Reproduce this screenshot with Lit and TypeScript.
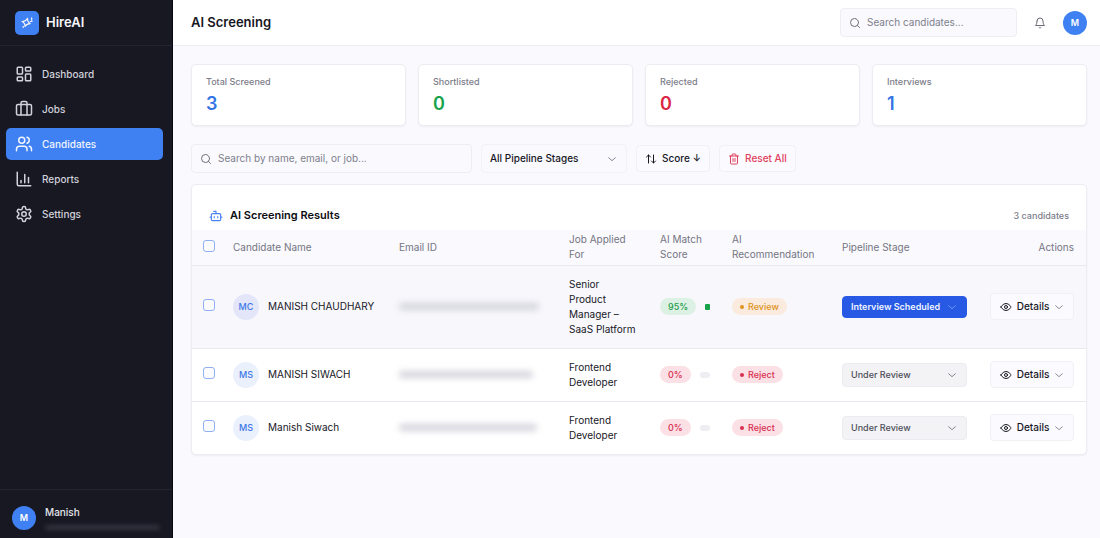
import { LitElement, html, svg, css } from "lit";
import { customElement } from "lit/decorators.js";
import { classMap } from "lit/directives/class-map.js";
import { styleMap } from "lit/directives/style-map.js";

const icons = {
  sparkles: svg`<path d="M13 4c-.4 5 .8 7 4.500 9-4.500-.2-6.500 1-9 5 .4-4.500-.8-6.500-5-8.500 4.700.3 7-1 9.500-5.500z"/><path d="M20 3v4M17.500 9.500l3.500-.5M5.500 17.500v2"/>`,
  dashboard: svg`<rect width="7" height="9" x="3" y="3" rx="1"/><rect width="7" height="5" x="14" y="3" rx="1"/><rect width="7" height="9" x="14" y="12" rx="1"/><rect width="7" height="5" x="3" y="16" rx="1"/>`,
  jobs: svg`<rect width="20" height="14" x="2" y="6" rx="2"/><path d="M16 20V4a2 2 0 0 0-2-2h-4a2 2 0 0 0-2 2v16"/>`,
  users: svg`<path d="M16 21v-2a4 4 0 0 0-4-4H6a4 4 0 0 0-4 4v2"/><circle cx="9" cy="7" r="4"/><path d="M22 21v-2a4 4 0 0 0-3-3.870M16 3.130a4 4 0 0 1 0 7.750"/>`,
  chart: svg`<path d="M3 3v16a2 2 0 0 0 2 2h16"/><path d="M8 17v-3M13 17V6M18 17v-7"/>`,
  settings: svg`<path d="M12.220 2h-.440a2 2 0 0 0-2 2v.180a2 2 0 0 1-1 1.730l-.430.250a2 2 0 0 1-2 0l-.150-.080a2 2 0 0 0-2.730.730l-.220.380a2 2 0 0 0 .730 2.730l.150.100a2 2 0 0 1 1 1.720v.510a2 2 0 0 1-1 1.740l-.150.090a2 2 0 0 0-.730 2.730l.220.380a2 2 0 0 0 2.730.730l.150-.080a2 2 0 0 1 2 0l.430.250a2 2 0 0 1 1 1.730V20a2 2 0 0 0 2 2h.440a2 2 0 0 0 2-2v-.180a2 2 0 0 1 1-1.730l.430-.250a2 2 0 0 1 2 0l.150.080a2 2 0 0 0 2.730-.730l.220-.390a2 2 0 0 0-.730-2.730l-.150-.080a2 2 0 0 1-1-1.740v-.500a2 2 0 0 1 1-1.740l.150-.090a2 2 0 0 0 .730-2.730l-.220-.380a2 2 0 0 0-2.730-.730l-.150.080a2 2 0 0 1-2 0l-.430-.250a2 2 0 0 1-1-1.730V4a2 2 0 0 0-2-2z"/><circle cx="12" cy="12" r="3"/>`,
  search: svg`<circle cx="11" cy="11" r="8"/><path d="m21 21-4.300-4.300"/>`,
  bell: svg`<path d="M6 8a6 6 0 0 1 12 0c0 7 3 9 3 9H3s3-2 3-9"/><path d="M10.300 21a1.940 1.940 0 0 0 3.400 0"/>`,
  chevron: svg`<path d="m4 9 8 7 8-7"/>`,
  sort: svg`<path d="m3 8 4-4 4 4M7 4v16M21 16l-4 4-4-4M17 20V4"/>`,
  trash: svg`<path d="M3 6h18M19 6v14a2 2 0 0 1-2 2H7a2 2 0 0 1-2-2V6M8 6V4a2 2 0 0 1 2-2h4a2 2 0 0 1 2 2v2M10 11v6M14 11v6"/>`,
  bot: svg`<path d="M12 8V4H8"/><rect width="16" height="12" x="4" y="8" rx="2"/><path d="M2 14h2M20 14h2M15 13v2M9 13v2"/>`,
  eye: svg`<path d="M2 12s3.500-7 10-7 10 7 10 7-3.500 7-10 7S2 12 2 12z"/><circle cx="12" cy="12" r="3"/>`,
};

const icon = (name: keyof typeof icons, size = 12) => html`<svg
  class="icon" width=${size} height=${size} viewBox="0 0 24 24" fill="none" stroke="currentColor"
  stroke-width="2" stroke-linecap="round" stroke-linejoin="round" aria-hidden="true">${icons[name]}</svg>`;

const nav: { label: string; icon: keyof typeof icons; active?: boolean }[] = [
  { label: "Dashboard", icon: "dashboard" },
  { label: "Jobs", icon: "jobs" },
  { label: "Candidates", icon: "users", active: true },
  { label: "Reports", icon: "chart" },
  { label: "Settings", icon: "settings" },
];

const stats = [
  { label: "Total Screened", value: 3, tone: "blue" },
  { label: "Shortlisted", value: 0, tone: "green" },
  { label: "Rejected", value: 0, tone: "red" },
  { label: "Interviews", value: 1, tone: "blue" },
];

const candidates = [
  { initials: "MC", name: "MANISH CHAUDHARY", email: 140, job: "Senior Product Manager – SaaS Platform", score: 95, verdict: "Review", stage: "Interview Scheduled", hover: true },
  { initials: "MS", name: "MANISH SIWACH", email: 134, job: "Frontend Developer", score: 0, verdict: "Reject", stage: "Under Review" },
  { initials: "MS", name: "Manish Siwach", email: 138, job: "Frontend Developer", score: 0, verdict: "Reject", stage: "Under Review" },
];

@customElement("app-root")
export class AppRoot extends LitElement {
  static styles = css`
    :host {
      display: flex;
      min-height: 100vh;
      background: #f9f9fe;
      color: #17171f;
      font: 400 10px/15px Inter, "Liberation Sans", sans-serif;
    }
    * { box-sizing: border-box; }
    button, input, select { font: inherit; color: inherit; margin: 0; }
    h1, h2, p { margin: 0; }
    .icon { display: block; flex: none; }

    .sidebar {
      flex: none;
      width: 173px;
      display: flex;
      flex-direction: column;
      background: #171822;
      border-right: 1px solid #07070f;
      color: #d2d2dc;
    }
    .brand {
      display: flex;
      align-items: center;
      gap: 7px;
      height: 46px;
      padding: 0 15px;
      border-bottom: 1px solid #23242f;
      color: #f5f5fa;
      font-size: 13px;
      font-weight: 600;
    }
    .logo {
      display: grid;
      place-items: center;
      width: 24px;
      height: 24px;
      border-radius: 5px;
      background: #3f80f2;
    }
    .nav {
      flex: 1;
      display: flex;
      flex-direction: column;
      gap: 3px;
      padding: 12px 9px 12px 6px;
    }
    .nav-link {
      display: flex;
      align-items: center;
      gap: 9px;
      height: 32px;
      padding: 0 9px;
      border-radius: 5px;
      color: inherit;
      font-weight: 500;
      text-decoration: none;
    }
    .nav-link.active { background: #3f80f2; color: #f2f6ff; }
    .account {
      display: flex;
      align-items: center;
      gap: 9px;
      height: 49px;
      padding: 7px 12px 0;
      border-top: 1px solid #23242f;
      color: #e6e6ee;
      font-weight: 500;
    }
    .account-text { display: flex; flex: 1; flex-direction: column; gap: 5px; }
    .account-mail { height: 5px; border-radius: 3px; background: #31323e; filter: blur(2px); }
    .disc {
      flex: none;
      display: grid;
      place-items: center;
      width: 24px;
      height: 24px;
      border-radius: 50%;
      background: #3f80f2;
      color: #fff;
      font-size: 9px;
      font-weight: 600;
    }

    .main { flex: 1; min-width: 0; }
    .topbar {
      display: flex;
      align-items: center;
      height: 46px;
      padding: 0 13px 0 18px;
      background: #fff;
      border-bottom: 1px solid #ececf2;
    }
    .title { flex: 1; font-size: 13px; font-weight: 600; }
    .field {
      display: flex;
      align-items: center;
      gap: 6px;
      height: 29px;
      padding: 0 8px;
      border: 1px solid #ededf3;
      border-radius: 4px;
      background: #f9f9fe;
      color: #6f6f7b;
    }
    .field input {
      flex: 1;
      min-width: 0;
      padding: 0;
      border: 0;
      outline: 0;
      background: none;
    }
    .field input::placeholder { color: #7f7f8b; opacity: 1; }
    .top-search { width: 177px; }
    .bell {
      display: grid;
      place-items: center;
      width: 24px;
      height: 24px;
      margin: 0 11px;
      padding: 0;
      border: 0;
      background: none;
      color: #6b6b76;
    }

    .content { display: flex; flex-direction: column; padding: 18px 13px 18px 18px; }
    .stats { display: grid; grid-template-columns: repeat(4, 1fr); gap: 12px; }
    .card {
      border: 1px solid #ececf2;
      border-radius: 5px;
      background: #fff;
      box-shadow: 0 1px 2px #1c1c3c0d;
    }
    .stat { height: 62px; padding: 9px 14px; }
    .stat-label { color: #7c7c89; font-size: 9px; font-weight: 500; }
    .stat-value { margin-top: 5px; font-size: 18px; line-height: 20px; font-weight: 600; }
    .blue { color: #3474e6; }
    .green { color: #16a34a; }
    .red { color: #dc2647; }

    .toolbar { display: flex; align-items: center; gap: 9px; margin: 18px 0 11px; }
    .filter-search { width: 281px; }
    .picker { position: relative; display: flex; align-items: center; color: #6f6f7b; }
    .picker select {
      width: 100%;
      height: 29px;
      padding: 0 24px 0 8px;
      border: 1px solid #f1f1f6;
      border-radius: 4px;
      background: #f9f9fe;
      color: #17171f;
      appearance: none;
    }
    .picker .icon { position: absolute; right: 10px; pointer-events: none; }
    .stage-filter { width: 146px; }
    .stage-filter select { font-weight: 500; }
    .stage { width: 125px; }
    .stage select { height: 24px; font-size: 9px; font-weight: 500; background: #f3f3f6; border-color: #ebebf0; color: #4d4d58; }
    .stage.scheduled { color: #7ba4f8; }
    .stage.scheduled select { height: 22px; background: #2759e4; border-color: #2759e4; color: #f0f4ff; font-weight: 600; }
    .btn {
      display: inline-flex;
      align-items: center;
      justify-content: center;
      gap: 5px;
      height: 27px;
      padding: 0 8px;
      border: 1px solid #f0f0f5;
      border-radius: 4px;
      background: #fafaff;
      font-weight: 500;
      white-space: nowrap;
    }
    .btn.danger { color: #e1415c; }
    .btn .faint { color: #777783; }

    .results-head { display: flex; align-items: center; gap: 7px; height: 45px; padding: 16px 17px 0; }
    .results-head .icon { color: #4b84f0; }
    .results-title { flex: 1; font-size: 11px; font-weight: 600; color: #0c0c12; }
    .count { color: #7c7c89; font-size: 9px; font-weight: 500; }
    table { width: 100%; border-collapse: collapse; table-layout: fixed; }
    th, td { padding: 11px; text-align: left; vertical-align: middle; font-weight: 400; }
    thead th { height: 35px; padding: 2px 11px; background: #f9f9fe; color: #757581; }
    thead tr, tbody tr { border-bottom: 1px solid #e9e9f0; }
    tbody tr:last-child { border-bottom: 0; }
    tbody tr.hover { background: #f7f7fc; }
    .col-check { width: 30px; }
    .col-name { width: 166px; }
    .col-job { width: 91px; }
    .col-score { width: 72px; }
    .col-verdict { width: 110px; }
    .col-stage { width: 148px; }
    .col-actions { width: 107px; }
    th.end, td.end { padding-right: 12px; text-align: right; }
    input[type="checkbox"] {
      display: block;
      width: 12px;
      height: 12px;
      margin-bottom: 3px;
      border: 1px solid #8fb0f3;
      border-radius: 3px;
      background: #fcfcff;
      appearance: none;
    }
    .person { display: flex; align-items: center; gap: 9px; white-space: nowrap; }
    .avatar {
      flex: none;
      display: grid;
      place-items: center;
      width: 26px;
      height: 26px;
      border-radius: 50%;
      background: #ebf0fd;
      color: #3d78e8;
      font-size: 9px;
      font-weight: 500;
    }
    .hover .avatar { background: #e3e6f9; }
    .email { height: 7px; border-radius: 4px; background: #d4d4dd; filter: blur(3px); }
    .score { display: flex; align-items: center; gap: 9px; }
    .pill {
      display: inline-flex;
      align-items: center;
      gap: 4px;
      height: 17px;
      padding: 0 8px;
      border-radius: 9px;
      font-size: 9px;
      font-weight: 500;
    }
    .pill.good { background: #dcf1e4; color: #1f9d4d; }
    .pill.bad { background: #fbe0e6; color: #d92f50; }
    .pill.warn { background: #fbeade; color: #dd9420; }
    .dot { width: 4px; height: 4px; border-radius: 50%; background: currentColor; }
    .meter { flex: 1; height: 6px; border-radius: 3px; background: #ededf2; overflow: hidden; }
    .full .meter { border-radius: 1px; }
    .meter-fill { height: 100%; background: #16a34a; }
    .details { height: 27px; width: 84px; gap: 5px; }
  `;

  private pick(options: string[], label: string, classes: Record<string, boolean>) {
    return html`<label class=${classMap({ picker: true, ...classes })}>
      <select aria-label=${label}>${options.map((o) => html`<option>${o}</option>`)}</select>
      ${icon("chevron", 10)}
    </label>`;
  }

  private row(c: (typeof candidates)[number]) {
    const good = c.score > 50;
    return html`<tr class=${classMap({ hover: !!c.hover })}>
      <td><input type="checkbox" aria-label="Select ${c.name}" /></td>
      <td><div class="person"><span class="avatar">${c.initials}</span>${c.name}</div></td>
      <td><div class="email" style=${styleMap({ width: `${c.email}px` })}></div></td>
      <td>${c.job}</td>
      <td>
        <div class=${classMap({ score: true, full: good })}>
          <span class=${classMap({ pill: true, good, bad: !good })}>${c.score}%</span>
          <div class="meter"><div class="meter-fill" style=${styleMap({ width: `${c.score}%` })}></div></div>
        </div>
      </td>
      <td><span class=${classMap({ pill: true, warn: good, bad: !good })}><i class="dot"></i>${c.verdict}</span></td>
      <td>${this.pick([c.stage], `Stage of ${c.name}`, { stage: true, scheduled: good })}</td>
      <td class="end"><button class="btn details">${icon("eye", 12)}Details<span class="faint">${icon("chevron", 10)}</span></button></td>
    </tr>`;
  }

  render() {
    return html`
      <aside class="sidebar">
        <div class="brand"><span class="logo">${icon("sparkles", 14)}</span>HireAI</div>
        <nav class="nav">
          ${nav.map((n) => html`<a href="#" class=${classMap({ "nav-link": true, active: !!n.active })}>${icon(n.icon, 18)}${n.label}</a>`)}
        </nav>
        <div class="account">
          <span class="disc">M</span>
          <div class="account-text"><span>Manish</span><div class="account-mail"></div></div>
        </div>
      </aside>
      <main class="main">
        <header class="topbar">
          <h1 class="title">AI Screening</h1>
          <label class="field top-search">${icon("search", 12)}<input type="text" aria-label="Search candidates" placeholder="Search candidates..." /></label>
          <button class="bell" aria-label="Notifications">${icon("bell", 12)}</button>
          <span class="disc">M</span>
        </header>
        <div class="content">
          <section class="stats">
            ${stats.map((s) => html`<div class="card stat"><p class="stat-label">${s.label}</p><p class="stat-value ${s.tone}">${s.value}</p></div>`)}
          </section>
          <div class="toolbar">
            <label class="field filter-search">${icon("search", 12)}<input type="text" aria-label="Search results" placeholder="Search by name, email, or job..." /></label>
            ${this.pick(["All Pipeline Stages"], "Pipeline stage", { "stage-filter": true })}
            <button class="btn">${icon("sort")}Score ↓</button>
            <button class="btn danger">${icon("trash")}Reset All</button>
          </div>
          <section class="card">
            <div class="results-head">${icon("bot", 14)}<h2 class="results-title">AI Screening Results</h2><span class="count">3 candidates</span></div>
            <table>
              <colgroup>
                <col class="col-check" /><col class="col-name" /><col /><col class="col-job" />
                <col class="col-score" /><col class="col-verdict" /><col class="col-stage" /><col class="col-actions" />
              </colgroup>
              <thead>
                <tr>
                  <th><input type="checkbox" aria-label="Select all" /></th>
                  <th>Candidate Name</th><th>Email ID</th><th>Job Applied For</th><th>AI Match Score</th>
                  <th>AI Recommendation</th><th>Pipeline Stage</th><th class="end">Actions</th>
                </tr>
              </thead>
              <tbody>${candidates.map((c) => this.row(c))}</tbody>
            </table>
          </section>
        </div>
      </main>
    `;
  }
}
